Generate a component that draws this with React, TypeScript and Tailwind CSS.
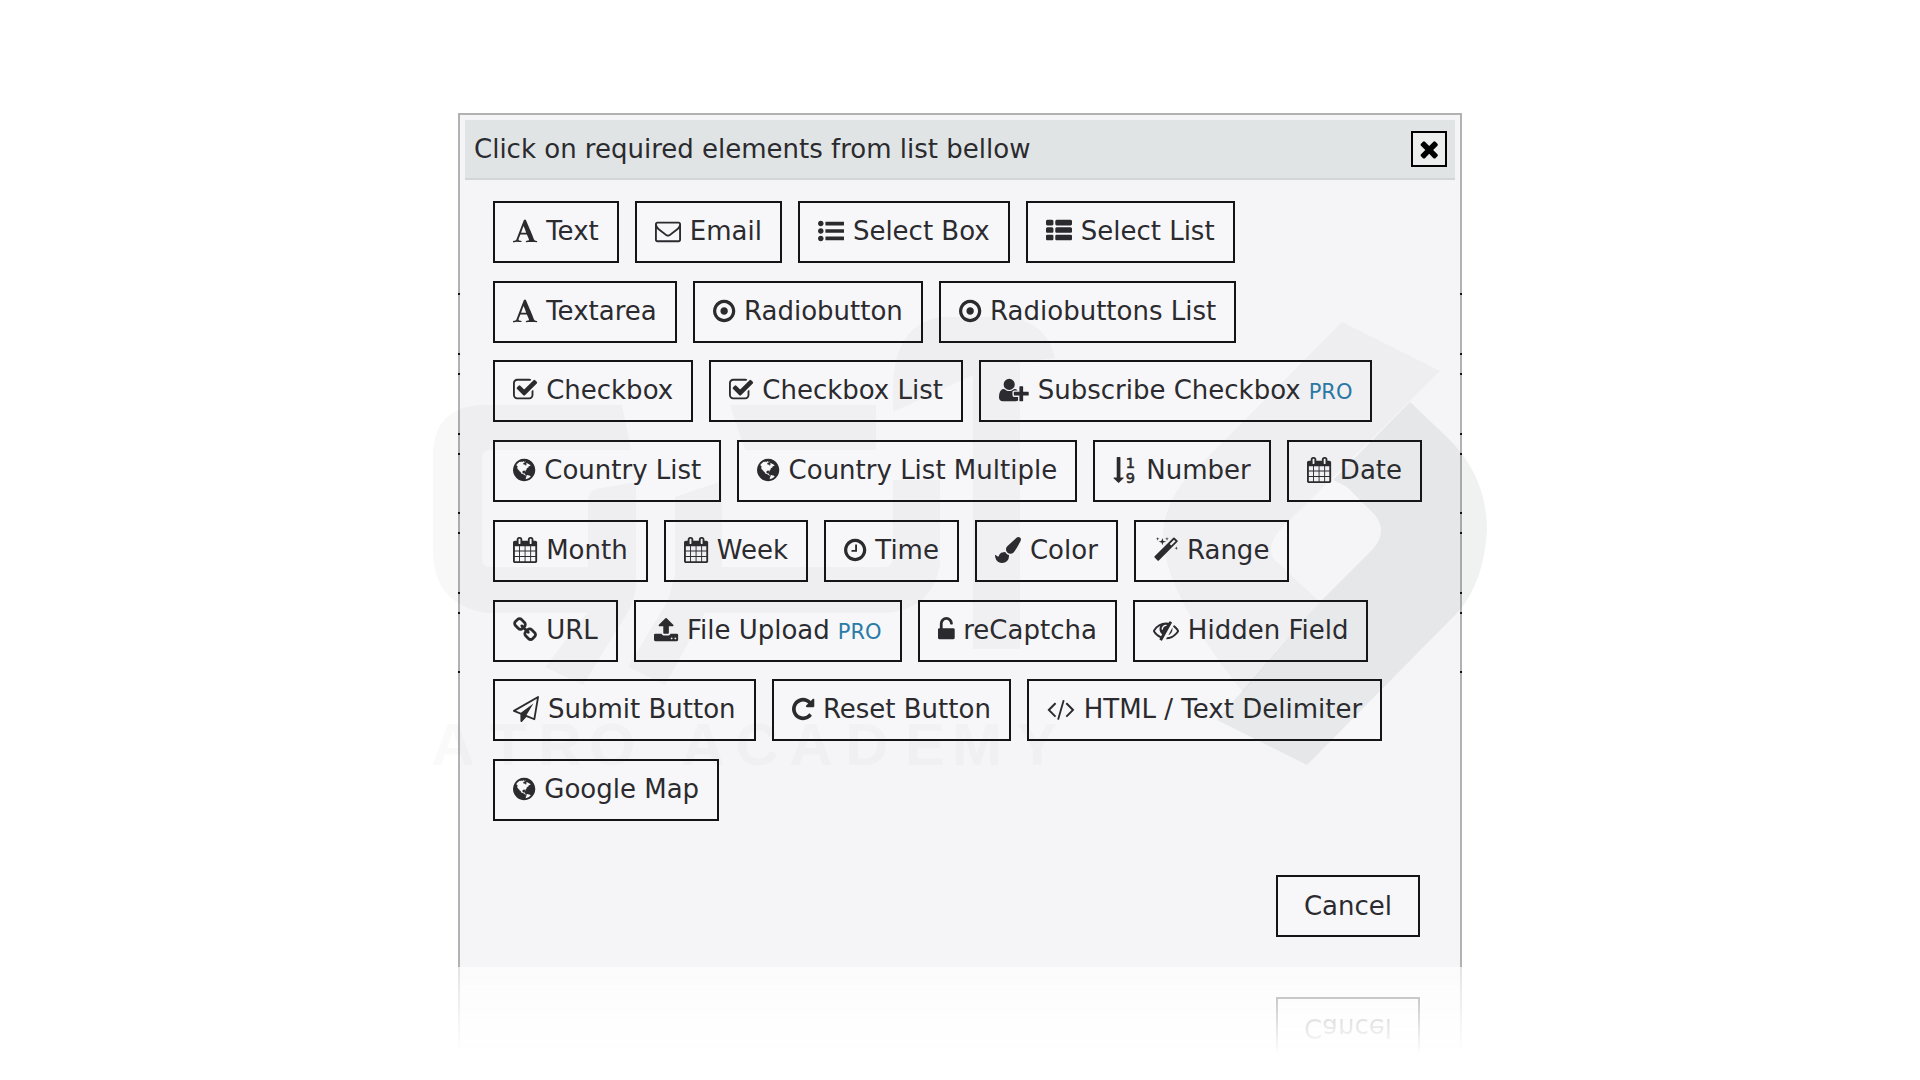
import React from "react";
import { clsx } from "clsx";

type Glyph = { x: number; w: number; d: string };

// x / w: horizontal slice of the 1792-unit em each glyph takes
const GLYPHS: Record<string, Glyph> = {
  font: {
    x: 0,
    w: 1664,
    d: "M725 559l-170 450q33 0 136.5 2t160.5 2q19 0 57-2-87-253-184-452zm-725 1105l2-79q23-7 56-12.5t57-10.5 49.5-14.5 44.5-29 31-50.5l237-616 280-724h128q8 14 11 21l205 480q33 78 106 257.5t114 274.5q15 34 58 144.5t72 168.5q20 45 35 57 19 15 88 29.5t84 20.5q6 38 6 57 0 5-.5 13.5t-.5 12.5q-63 0-190-8t-191-8q-76 0-215 7t-178 8q0-43 4-78l131-28q1 0 12.5-2.5t15.5-3.5 14.5-4.5 15-6.5 11-8 9-11 2.5-14q0-16-31-96.5t-72-177.5-42-100l-450-2q-26 58-76.5 195.5t-50.5 162.5q0 22 14 37.5t43.5 24.5 48.5 13.5 57 8.5 41 4q1 19 1 58 0 9-2 27-58 0-174.5-10t-174.5-10q-8 0-26.5 4t-21.5 4q-80 14-188 14z",
  },
  envelope: {
    x: 0,
    w: 1792,
    d: "M1664 1504v-768q-32 36-69 66-268 206-426 338-51 43-83 67t-86.5 48.5-102.5 24.5h-2q-48 0-102.5-24.5t-86.5-48.5-83-67q-158-132-426-338-37-30-69-66v768q0 13 9.5 22.5t22.5 9.5h1472q13 0 22.5-9.5t9.5-22.5zm0-1051v-24.5l-.5-13-3-12.5-5.5-9-9-7.5-14-2.5h-1472q-13 0-22.5 9.5t-9.5 22.5q0 168 147 284 193 152 401 317 6 5 35 29.5t46 37.5 44.5 31.5 50.5 27.5 43 9h2q20 0 43-9t50.5-27.5 44.5-31.5 46-37.5 35-29.5q208-165 401-317 54-43 100.5-115.5t46.5-131.5zm128-37v1088q0 66-47 113t-113 47h-1472q-66 0-113-47t-47-113v-1088q0-66 47-113t113-47h1472q66 0 113 47t47 113z",
  },
  listUl: {
    x: 0,
    w: 1792,
    d: "M384 1408q0 80-56 136t-136 56-136-56-56-136 56-136 136-56 136 56 56 136zm0-512q0 80-56 136t-136 56-136-56-56-136 56-136 136-56 136 56 56 136zm1408 416v192q0 13-9.5 22.5t-22.5 9.5h-1216q-13 0-22.5-9.5t-9.5-22.5v-192q0-13 9.5-22.5t22.5-9.5h1216q13 0 22.5 9.5t9.5 22.5zm-1408-928q0 80-56 136t-136 56-136-56-56-136 56-136 136-56 136 56 56 136zm1408 416v192q0 13-9.5 22.5t-22.5 9.5h-1216q-13 0-22.5-9.5t-9.5-22.5v-192q0-13 9.5-22.5t22.5-9.5h1216q13 0 22.5 9.5t9.5 22.5zm0-512v192q0 13-9.5 22.5t-22.5 9.5h-1216q-13 0-22.5-9.5t-9.5-22.5v-192q0-13 9.5-22.5t22.5-9.5h1216q13 0 22.5 9.5t9.5 22.5z",
  },
  thList: {
    x: 0,
    w: 1792,
    d: "M512 1248v192q0 40-28 68t-68 28h-320q-40 0-68-28t-28-68v-192q0-40 28-68t68-28h320q40 0 68 28t28 68zm0-512v192q0 40-28 68t-68 28h-320q-40 0-68-28t-28-68v-192q0-40 28-68t68-28h320q40 0 68 28t28 68zm1280 512v192q0 40-28 68t-68 28h-960q-40 0-68-28t-28-68v-192q0-40 28-68t68-28h960q40 0 68 28t28 68zm-1280-1024v192q0 40-28 68t-68 28h-320q-40 0-68-28t-28-68v-192q0-40 28-68t68-28h320q40 0 68 28t28 68zm1280 512v192q0 40-28 68t-68 28h-960q-40 0-68-28t-28-68v-192q0-40 28-68t68-28h960q40 0 68 28t28 68zm0-512v192q0 40-28 68t-68 28h-960q-40 0-68-28t-28-68v-192q0-40 28-68t68-28h960q40 0 68 28t28 68z",
  },
  dotCircle: {
    x: 128,
    w: 1536,
    d: "M1152 896q0 106-75 181t-181 75-181-75-75-181 75-181 181-75 181 75 75 181zm-256-544q-148 0-273 73t-198 198-73 273 73 273 198 198 273 73 273-73 198-198 73-273-73-273-198-198-273-73zm768 544q0 209-103 385.5t-279.5 279.5-385.5 103-385.5-103-279.5-279.5-103-385.5 103-385.5 279.5-279.5 385.5-103 385.5 103 279.5 279.5 103 385.5z",
  },
  checkSquare: {
    x: 64,
    w: 1664,
    d: "M1472 930v318q0 119-84.5 203.5t-203.5 84.5h-832q-119 0-203.5-84.5t-84.5-203.5v-832q0-119 84.5-203.5t203.5-84.5h832q63 0 117 25 15 7 18 23 3 17-9 29l-49 49q-10 10-23 10-3 0-9-2-23-6-45-6h-832q-66 0-113 47t-47 113v832q0 66 47 113t113 47h832q66 0 113-47t47-113v-254q0-13 9-22l64-64q10-10 23-10 6 0 12 3 20 8 20 29zm231-489l-814 814q-24 24-57 24t-57-24l-430-430q-24-24-24-57t24-57l110-110q24-24 57-24t57 24l263 263 647-647q24-24 57-24t57 24l110 110q24 24 24 57t-24 57z",
  },
  userPlus: {
    x: 0,
    w: 2048,
    d: "M704 896q-159 0-271.5-112.5t-112.5-271.5 112.5-271.5 271.5-112.5 271.5 112.5 112.5 271.5-112.5 271.5-271.5 112.5zm960 128h352q13 0 22.5 9.5t9.5 22.5v192q0 13-9.5 22.5t-22.5 9.5h-352v352q0 13-9.5 22.5t-22.5 9.5h-192q-13 0-22.5-9.5t-9.5-22.5v-352h-352q-13 0-22.5-9.5t-9.5-22.5v-192q0-13 9.5-22.5t22.5-9.5h352v-352q0-13 9.5-22.5t22.5-9.5h192q13 0 22.5 9.5t9.5 22.5v352zm-736 224q0 52 38 90t90 38h256v238q-68 50-171 50h-874q-121 0-194-69t-73-190q0-53 3.5-103.5t14-109 26.5-108.5 43-97.5 62-81 85.5-53.5 111.5-20q19 0 39 17 79 61 154.5 91.5t164.5 30.5 164.5-30.5 154.5-91.5q20-17 39-17 132 0 217 96h-223q-52 0-90 38t-38 90v192z",
  },
  globe: {
    x: 128,
    w: 1536,
    d: "M896 128q209 0 385.5 103t279.5 279.5 103 385.5-103 385.5-279.5 279.5-385.5 103-385.5-103-279.5-279.5-103-385.5 103-385.5 279.5-279.5 385.5-103zm274 521q-2 1-9.5 9.5t-13.5 9.5q2 0 4.5-5t5-11 3.5-7q6-7 22-15 14-6 52-12 34-8 51 11-2-2 9.5-13t14.5-12q3-2 15-4.5t15-7.5l2-22q-12 1-17.5-7t-6.5-21q0 2-6 8 0-7-4.5-8t-11.5 1-9 1q-10-3-15-7.5t-8-16.5-4-15q-2-5-9.5-11t-9.5-10q-1-2-2.5-5.5t-3-6.5-4-5.5-5.5-2.5-7 5-7.5 10-4.5 5q-3-2-6-1.5t-4.5 1-4.5 3-5 3.5q-3 2-8.5 3t-8.5 2q15-5-1-11-10-4-16-3 9-4 7.5-12t-8.5-14h5q-1-4-8.5-8.5t-17.5-8.5-13-6q-8-5-34-9.5t-33-.5q-5 6-4.5 10.5t4 14 3.5 12.5q1 6-5.5 13t-6.5 12q0 7 14 15.5t10 21.5q-3 8-16 16t-16 12q-5 8-1.5 18.5t10.5 16.5q2 2 1.5 4t-3.5 4.5-5.5 4-6.5 3.5l-3 2q-11 5-20.5-6t-13.5-26q-7-25-16-30-23-8-29 1-5-13-41-26-25-9-58-4 6-1 0-15-7-15-19-12 3-6 4-17.5t1-13.5q3-13 12-23 1-1 7-8.5t9.5-13.5.5-6q35 4 50-11 5-5 11.5-17t10.5-17q9-6 14-5.5t14.5 5.5 14.5 5q14 1 15.5-11t-7.5-20q12 1 3-17-4-7-8-9-12-4-27 5-8 4 2 8-1-1-9.5 10.5t-16.5 17.5-16-5q-1-1-5.5-13.5t-9.5-13.5q-8 0-16 15 3-8-11-15t-24-8q19-12-8-27-7-4-20.5-5t-19.5 4q-5 7-5.5 11.5t5 8 10.5 5.5 11.5 4 8.5 3q14 10 8 14-2 1-8.5 3.5t-11.5 4.5-6 4q-3 4 0 14t-2 14q-5-5-9-17.5t-7-16.5q7 9-25 6l-10-1q-4 0-16 2t-20.5 1-13.5-8q-4-8 0-20 1-4 4-2-4-3-11-9.5t-10-8.5q-46 15-94 41 6 1 12-1 5-2 13-6.5t10-5.5q34-14 42-7l5-5q14 16 20 25-7-4-30-1-20 6-22 12 7 12 5 18-4-3-11.5-10t-14.5-11-15-5q-16 0-22 1-146 80-235 222 7 7 12 8 4 1 5 9t2.5 11 11.5-3q9 8 3 19 1-1 44 27 19 17 21 21 3 11-10 18-1-2-9-9t-9-4q-3 5 .5 18.5t10.5 12.5q-7 0-9.5 16t-2.5 35.5-1 23.5l2 1q-3 12 5.5 34.5t21.5 19.5q-13 3 20 43 6 8 8 9 3 2 12 7.5t15 10 10 10.5q4 5 10 22.5t14 23.5q-2 6 9.5 20t10.5 23q-1 0-2.5 1t-2.5 1q3 7 15.5 14t15.5 13q1 3 2 10t3 11 8 2q2-20-24-62-15-25-17-29-3-5-5.5-15.5t-4.5-14.5q2 0 6 1.5t8.5 3.5 7.5 4 2 3q-3 7 2 17.5t12 18.5 17 19 12 13q6 6 14 19.5t0 13.5q9 0 20 10.5t17 19.5q5 8 8 26t5 24q2 7 8.5 13.5t12.5 9.5l16 8 13 7q5 2 18.5 10.5t21.5 11.5q10 4 16 4t14.5-2.5 13.5-3.5q15-2 29 15t21 21q36 19 55 11-2 1 .5 7.5t8 15.5 9 14.5 5.5 8.5q5 6 18 15t18 15q6-4 7-9-3 8 7 20t18 10q14-3 14-32-31 15-49-18 0-1-2.5-5.5t-4-8.5-2.5-8.5 0-7.5 5-3q9 0 10-3.5t-2-12.5-4-13q-1-8-11-20t-12-15q-5 9-16 8t-16-9q0 1-1.5 5.5t-1.5 6.5q-13 0-15-1 1-3 2.5-17.5t3.5-22.5q1-4 5.5-12t7.5-14.5 4-12.5-4.5-9.5-17.5-2.5q-19 1-26 20-1 3-3 10.5t-5 11.5-9 7q-7 3-24 2t-24-5q-13-8-22.5-29t-9.5-37q0-10 2.5-26.5t3-25-5.5-24.5q3-2 9-9.5t10-10.5q2-1 4.5-1.5t4.5 0 4-1.5 3-6q-1-1-4-3-3-3-4-3 7 3 28.5-1.5t27.5 1.5q15 11 22-2 0-1-2.5-9.5t-.5-13.5q5 27 29 9 3 3 15.5 5t17.5 5q3 2 7 5.5t5.5 4.5 5-.5 8.5-6.5q10 14 12 24 11 40 19 44 7 3 11 2t4.5-9.5 0-14-1.5-12.5l-1-8v-18l-1-8q-15-3-18.5-12t1.5-18.5 15-18.5q1-1 8-3.5t15.5-6.5 12.5-8q21-19 15-35 7 0 11-9-1 0-5-3t-7.5-5-4.5-2q9-5 2-16 5-3 7.5-11t7.5-10q9 12 21 2 7-8 1-16 5-7 20.5-10.5t18.5-9.5q7 2 8-2t1-12 3-12q4-5 15-9t13-5l17-11q3-4 0-4 18 2 31-11 10-11-6-20 3-6-3-9.5t-15-5.5q3-1 11.5-.5t10.5-1.5q15-10-7-16-17-5-43 12zm-163 877q206-36 351-189-3-3-12.5-4.5t-12.5-3.5q-18-7-24-8 1-7-2.5-13t-8-9-12.5-8-11-7q-2-2-7-6t-7-5.5-7.5-4.5-8.5-2-10 1l-3 1q-3 1-5.5 2.5t-5.5 3-4 3 0 2.5q-21-17-36-22-5-1-11-5.5t-10.5-7-10-1.5-11.5 7q-5 5-6 15t-2 13q-7-5 0-17.5t2-18.5q-3-6-10.5-4.5t-12 4.5-11.5 8.5-9 6.5-8.5 5.5-8.5 7.5q-3 4-6 12t-5 11q-2-4-11.5-6.5t-9.5-5.5q2 10 4 35t5 38q7 31-12 48-27 25-29 40-4 22 12 26 0 7-8 20.5t-7 21.5q0 6 2 16z",
  },
  sortDown: {
    x: 0,
    w: 1664,
    d: "M736 1440q0 12-10 24l-319 319q-10 9-23 9-12 0-23-9l-320-320q-15-16-7-35 8-20 30-20h192v-1376q0-14 9-23t23-9h192q14 0 23 9t9 23v1376h192q14 0 23 9t9 23z",
  },
  calendar: {
    x: 64,
    w: 1664,
    d: "M192 1664h288v-288h-288v288zm352 0h320v-288h-320v288zm-352-352h288v-320h-288v320zm352 0h320v-320h-320v320zm-352-384h288v-288h-288v288zm736 736h320v-288h-320v288zm-384-736h320v-288h-320v288zm768 736h288v-288h-288v288zm-384-352h320v-320h-320v320zm-352-864v-288q0-13-9.5-22.5t-22.5-9.5h-64q-13 0-22.5 9.5t-9.5 22.5v288q0 13 9.5 22.5t22.5 9.5h64q13 0 22.5-9.5t9.5-22.5zm736 864h288v-320h-288v320zm-384-384h320v-288h-320v288zm384 0h288v-288h-288v288zm32-480v-288q0-13-9.5-22.5t-22.5-9.5h-64q-13 0-22.5 9.5t-9.5 22.5v288q0 13 9.5 22.5t22.5 9.5h64q13 0 22.5-9.5t9.5-22.5zm384-64v1280q0 52-38 90t-90 38h-1408q-52 0-90-38t-38-90v-1280q0-52 38-90t90-38h128v-96q0-66 47-113t113-47h64q66 0 113 47t47 113v96h384v-96q0-66 47-113t113-47h64q66 0 113 47t47 113v96h128q52 0 90 38t38 90z",
  },
  clock: {
    x: 128,
    w: 1536,
    d: "M1024 544v448q0 14-9 23t-23 9h-320q-14 0-23-9t-9-23v-64q0-14 9-23t23-9h224v-352q0-14 9-23t23-9h64q14 0 23 9t9 23zm416 352q0-148-73-273t-198-198-273-73-273 73-198 198-73 273 73 273 198 198 273 73 273-73 198-198 73-273zm224 0q0 209-103 385.5t-279.5 279.5-385.5 103-385.5-103-279.5-279.5-103-385.5 103-385.5 279.5-279.5 385.5-103 385.5 103 279.5 279.5 103 385.5z",
  },
  brush: {
    x: 0,
    w: 1792,
    d: "M1615 0q70 0 122.5 46.5t52.5 116.5q0 63-45 151-332 629-465 752-97 91-218 91-126 0-216.5-92.5t-90.5-219.5q0-128 92-212l638-579q59-54 130-54zm-909 1034q39 76 106.5 130t150.5 76l1 71q4 213-129.5 347t-348.5 134q-123 0-218-46.5t-152.5-127.5-86.5-183-29-220q7 5 41 30t62 44.5 59 36.5 46 17q41 0 55-37 25-66 57.5-112.5t69.5-76 88-47.5 103-25.5 125-10.5z",
  },
  magic: {
    x: 64,
    w: 1664,
    d: "M1254 581l293-293-107-107-293 293zm447-293q0 27-18 45l-1286 1286q-18 18-45 18t-45-18l-198-198q-18-18-18-45t18-45l1286-1286q18-18 45-18t45 18l198 198q18 18 18 45zm-1351-190l98 30-98 30-30 98-30-98-98-30 98-30 30-98zm350 162l196 60-196 60-60 196-60-196-196-60 196-60 60-196zm930 478l98 30-98 30-30 98-30-98-98-30 98-30 30-98zm-640-640l98 30-98 30-30 98-30-98-98-30 98-30 30-98z",
  },
  chain: {
    x: 64,
    w: 1664,
    d: "M1520 1216q0-40-28-68l-208-208q-28-28-68-28-42 0-72 32 3 3 19 18.5t21.5 21.5 15 19 13 25.5 3.5 27.5q0 40-28 68t-68 28q-15 0-27.5-3.5t-25.5-13-19-15-21.5-21.5-18.5-19q-33 31-33 73 0 40 28 68l206 207q27 27 68 27 40 0 68-26l147-146q28-28 28-67zm-703-705q0-40-28-68l-206-207q-28-28-68-28-39 0-68 27l-147 146q-28 28-28 67 0 40 28 68l208 208q27 27 68 27 42 0 72-31-3-3-19-18.5t-21.5-21.5-15-19-13-25.5-3.5-27.5q0-40 28-68t68-28q15 0 27.5 3.5t25.5 13 19 15 21.5 21.5 18.5 19q33-31 33-73zm895 705q0 120-85 203l-147 146q-83 83-203 83-121 0-204-85l-206-207q-83-83-83-203 0-123 88-209l-88-88q-86 88-208 88-120 0-204-84l-208-208q-84-84-84-204t85-203l147-146q83-83 203-83 121 0 204 85l206 207q83 83 83 203 0 123-88 209l88 88q86-88 208-88 120 0 204 84l208 208q84 84 84 204z",
  },
  upload: {
    x: 64,
    w: 1664,
    d: "M1344 1472q0-26-19-45t-45-19-45 19-19 45 19 45 45 19 45-19 19-45zm256 0q0-26-19-45t-45-19-45 19-19 45 19 45 45 19 45-19 19-45zm128-224v320q0 40-28 68t-68 28h-1472q-40 0-68-28t-28-68v-320q0-40 28-68t68-28h427q21 56 70.5 92t110.5 36h256q61 0 110.5-36t70.5-92h427q40 0 68 28t28 68zm-325-648q-17 40-59 40h-256v448q0 26-19 45t-45 19h-256q-26 0-45-19t-19-45v-448h-256q-42 0-59-40-17-39 14-69l448-448q18-19 45-19t45 19l448 448q31 30 14 69z",
  },
  unlock: {
    x: 320,
    w: 1152,
    d: "M1376 768q40 0 68 28t28 68v576q0 40-28 68t-68 28h-960q-40 0-68-28t-28-68v-576q0-40 28-68t68-28h32v-320q0-185 131.5-316.5t316.5-131.5 316.5 131.5 131.5 316.5q0 26-19 45t-45 19h-64q-26 0-45-19t-19-45q0-106-75-181t-181-75-181 75-75 181v320h736z",
  },
  eyeSlash: {
    x: 0,
    w: 1792,
    d: "M555 1335l78-141q-87-63-136-159t-49-203q0-121 61-225-229 117-381 353 167 258 427 375zm389-759q0-20-14-34t-34-14q-125 0-214.5 89.5t-89.5 214.5q0 20 14 34t34 14 34-14 14-34q0-86 61-147t147-61q20 0 34-14t14-34zm363-191q0 7-1 9-106 189-316 567t-315 566l-49 89q-10 16-28 16-12 0-134-70-16-10-16-28 0-12 44-87-143-65-263.5-173t-208.5-245q-20-31-20-69t20-69q153-235 380-371t496-136q89 0 180 17l54-97q10-16 28-16 5 0 18 6t31 15.5 33 18.5 31.5 18.5 19.5 11.5q16 10 16 27zm37 447q0 139-79 253.5t-209 164.5l280-502q8 45 8 84zm448 128q0 35-20 69-39 64-109 145-150 172-347.5 267t-419.5 95l74-132q212-18 392.5-137t301.5-307q-115-179-282-294l63-112q95 64 182.5 153t144.5 184q20 34 20 69z",
  },
  plane: {
    x: 0,
    w: 1792,
    d: "M1764 11q33 24 27 64l-256 1536q-5 29-32 45-14 8-31 8-11 0-24-5l-527-215-298 327q-18 21-47 21-14 0-23-4-19-7-30-23.5t-11-36.5v-452l-472-193q-37-14-40-55-3-39 32-59l1664-960q35-21 68 2zm-342 1499l221-1323-1434 827 336 137 863-639-478 797z",
  },
  repeat: {
    x: 128,
    w: 1536,
    d: "M1664 256v448q0 26-19 45t-45 19h-448q-42 0-59-40-17-39 14-69l138-138q-148-137-349-137-104 0-198.5 40.5t-163.5 109.5-109.5 163.5-40.5 198.5 40.5 198.5 109.5 163.5 163.5 109.5 198.5 40.5q119 0 225-52t179-147q7-10 23-12 15 0 25 9l137 138q9 8 9.5 20.5t-7.5 22.5q-109 132-264 204.5t-327 72.5q-156 0-298-61t-245-164-164-245-61-298 61-298 164-245 245-164 298-61q147 0 284.5 55.5t244.5 156.5l130-129q29-31 70-14 39 17 39 59z",
  },
  code: {
    x: -64,
    w: 1920,
    d: "M553 1399l-50 50q-10 10-23 10t-23-10l-466-466q-10-10-10-23t10-23l466-466q10-10 23-10t23 10l50 50q10 10 10 23t-10 23l-393 393 393 393q10 10 10 23t-10 23zm591-1067l-373 1291q-4 13-15.5 19.5t-23.5 2.5l-62-17q-13-4-19.5-15.5t-2.5-24.5l373-1291q4-13 15.5-19.5t23.5-2.5l62 17q13 4 19.5 15.5t2.5 24.5zm657 651l-466 466q-10 10-23 10t-23-10l-50-50q-10-10-10-23t10-23l393-393-393-393q-10-10-10-23t10-23l50-50q10-10 23-10t23 10l466 466q10 10 10 23t-10 23z",
  },
  close: {
    x: 192,
    w: 1408,
    d: "M1490 1322q0 40-28 68l-136 136q-28 28-68 28t-68-28l-294-294-294 294q-28 28-68 28t-68-28l-136-136q-28-28-28-68t28-68l294-294-294-294q-28-28-28-68t28-68l136-136q28-28 68-28t68 28l294 294 294-294q28-28 68-28t68 28l136 136q28 28 28 68t-28 68l-294 294 294 294q28 28 28 68z",
  },
};

function Icon({ name, className }: { name: string; className?: string }) {
  const glyph = GLYPHS[name];
  return (
    <svg
      viewBox={`${glyph.x} 0 ${glyph.w} 1792`}
      className={clsx("h-[26px] w-auto shrink-0 overflow-visible fill-current", className)}
      aria-hidden="true"
    >
      <path d={glyph.d} />
      {name === "sortDown" && (
        <g fontFamily="DejaVu Sans" fontSize="1000" stroke="currentColor" strokeWidth="40">
          <text x="880" y="750">1</text>
          <text x="880" y="1770">9</text>
        </g>
      )}
    </svg>
  );
}

type Item = { icon: string; label: string; pro?: boolean };

const ROWS: Item[][] = [
  [
    { icon: "font", label: "Text" },
    { icon: "envelope", label: "Email" },
    { icon: "listUl", label: "Select Box" },
    { icon: "thList", label: "Select List" },
  ],
  [
    { icon: "font", label: "Textarea" },
    { icon: "dotCircle", label: "Radiobutton" },
    { icon: "dotCircle", label: "Radiobuttons List" },
  ],
  [
    { icon: "checkSquare", label: "Checkbox" },
    { icon: "checkSquare", label: "Checkbox List" },
    { icon: "userPlus", label: "Subscribe Checkbox", pro: true },
  ],
  [
    { icon: "globe", label: "Country List" },
    { icon: "globe", label: "Country List Multiple" },
    { icon: "sortDown", label: "Number" },
    { icon: "calendar", label: "Date" },
  ],
  [
    { icon: "calendar", label: "Month" },
    { icon: "calendar", label: "Week" },
    { icon: "clock", label: "Time" },
    { icon: "brush", label: "Color" },
    { icon: "magic", label: "Range" },
  ],
  [
    { icon: "chain", label: "URL" },
    { icon: "upload", label: "File Upload", pro: true },
    { icon: "unlock", label: "reCaptcha" },
    { icon: "eyeSlash", label: "Hidden Field" },
  ],
  [
    { icon: "plane", label: "Submit Button" },
    { icon: "repeat", label: "Reset Button" },
    { icon: "code", label: "HTML / Text Delimiter" },
  ],
  [{ icon: "globe", label: "Google Map" }],
];

const BOX = "flex h-[62px] items-center border-2 border-[#141416] bg-[#f7f7f9] whitespace-nowrap";

function ElementButton({ item }: { item: Item }) {
  return (
    <button type="button" className={clsx(BOX, "gap-[9px] px-[18px] pb-0.5")}>
      <Icon name={item.icon} />
      <span>
        {item.label}
        {item.pro && <span className="ml-2 text-[21px] leading-none text-[#2a7ba6]">PRO</span>}
      </span>
    </button>
  );
}

function Footer({ mirrored }: { mirrored?: boolean }) {
  return (
    <div className="flex justify-end pr-10 pb-[30px]">
      {mirrored ? (
        <div className={clsx(BOX, "px-[26px]")}>Cancel</div>
      ) : (
        <button type="button" className={clsx(BOX, "px-[26px]")}>
          Cancel
        </button>
      )}
    </div>
  );
}

const TAGLINE: [string, number][] = [
  ["A", 453], ["T", 508], ["R", 560], ["O", 612], ["A", 703], ["C", 757],
  ["A", 811], ["D", 867], ["E", 925], ["M", 977], ["Y", 1037],
];

// faint academy mark laid over the whole dialog
function Watermark() {
  return (
    <svg
      viewBox="418 300 1084 480"
      className="pointer-events-none absolute top-[187px] -left-10 w-[calc(100%+80px)] overflow-visible"
      aria-hidden="true"
    >
      <g fill="#44464a" fillOpacity="0.035">
        <path d="M480 405H622L631 450H490Q482 450 482 458V559Q482 567 490 567H588V500Q588 492 596 489L636 482V583Q636 600 626 615L583 685L545 667L587 613H487Q433 605 433 550V450Q436 408 480 405Z" />
        <path d="M730 405H876V450H745Z" />
        <path d="M675 497L722 481V567H883Q893 567 893 557V480H940V565Q932 610 885 613H705L665 685L628 667L668 600L675 575Z" />
        <path d="M893 412V385Q895 325 940 317H1000Q1045 317 1055 358L1020 362V649H973V375Z" />
        <path d="M1342 322L1440 371L1290 520Q1262 545 1275 560L1320 602L1243 692Q1200 640 1177 590Q1163 560 1163 533Q1166 500 1187 478Z" />
      </g>
      <path
        fill="#3c4248"
        fillOpacity="0.075"
        d="M1410 402L1450 440Q1487 478 1487 530Q1484 580 1460 610L1307 765L1217 720L1320 602L1373 549Q1388 532 1375 515L1347 487L1333 480Z"
      />
      <g fill="#44464a" fillOpacity="0.026" fontFamily="Liberation Sans" fontWeight="bold" fontSize="60" textAnchor="middle">
        {TAGLINE.map(([letter, x]) => (
          <text key={x} x={x} y="765">
            {letter}
          </text>
        ))}
      </g>
      <path
        stroke="#111"
        strokeWidth="2"
        d="M458 294h2M458 354h2M458 374h2M458 434h2M458 454h2M458 513h2M458 533h2M458 593h2M458 613h2M458 672h2M1460 294h2M1460 354h2M1460 374h2M1460 434h2M1460 454h2M1460 513h2M1460 533h2M1460 593h2M1460 613h2M1460 672h2"
      />
    </svg>
  );
}

export default function App() {
  return (
    <main className="flex flex-col items-center overflow-hidden bg-white pt-[113px] font-['DejaVu_Sans',Verdana,sans-serif] text-[26px] leading-8 text-[#2b2b2f]">
      <div className="relative w-full max-w-[1004px]">
        <section
          role="dialog"
          aria-labelledby="picker-title"
          className="border-2 border-b-0 border-[#b2b2b2] bg-[#f5f5f7]"
        >
          <header className="m-[5px] flex h-[60px] items-center justify-between border-b-2 border-[#d3d6d7] bg-[#e1e4e4] pr-2 pl-[9px]">
            <h1 id="picker-title">Click on required elements from list bellow</h1>
            <button
              type="button"
              aria-label="Close"
              className="flex size-9 items-center justify-center border-2 border-black bg-[#eceeee] text-black"
            >
              <Icon name="close" className="h-6" />
            </button>
          </header>

          <div className="mt-[21px] flex min-h-[620px] flex-col justify-between px-[33px]">
            {ROWS.map((row) => (
              <div key={row[0].label} className="flex gap-4">
                {row.map((item) => (
                  <ElementButton key={item.label} item={item} />
                ))}
              </div>
            ))}
          </div>

          <div className="pt-[54px]">
            <Footer />
          </div>
        </section>
        <Watermark />
      </div>

      {/* mirror of the dialog foot, fading out */}
      <div
        aria-hidden="true"
        className="w-full max-w-[1004px] overflow-hidden opacity-35 [mask-image:linear-gradient(to_bottom,black,transparent_95%)]"
      >
        <div className="-scale-y-100 border-x-2 border-[#b2b2b2] bg-[#f5f5f7]">
          <Footer mirrored />
        </div>
      </div>
    </main>
  );
}
